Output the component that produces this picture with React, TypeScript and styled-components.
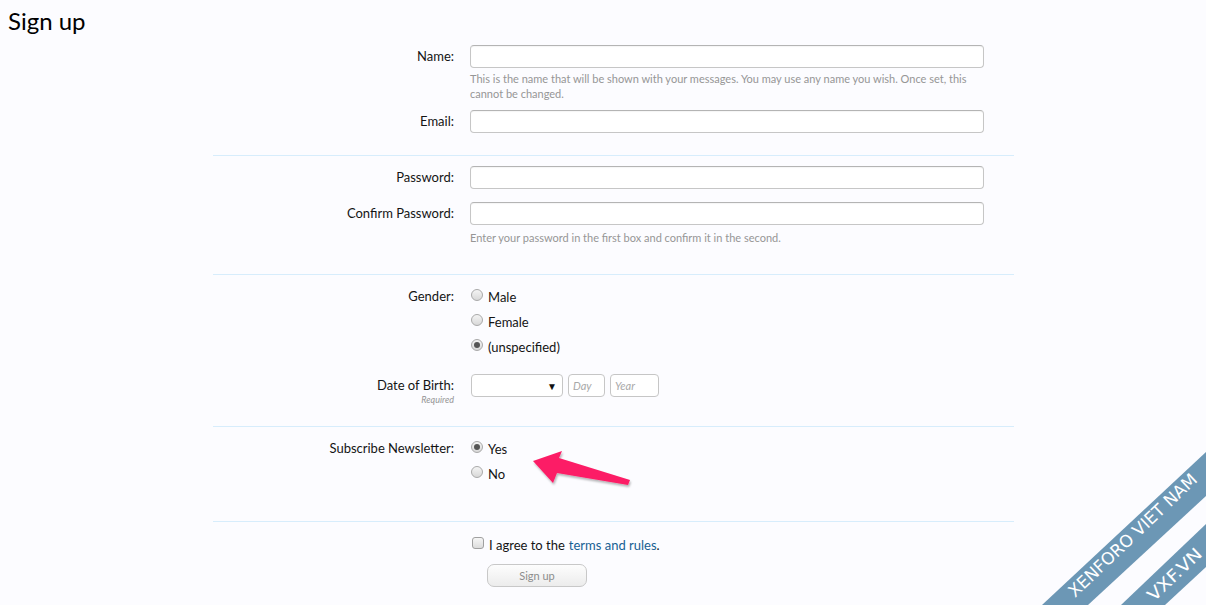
import styled, { createGlobalStyle } from "styled-components";

const GlobalStyle = createGlobalStyle`
  html, body {
    margin: 0;
    padding: 0;
    background: #fcfcff;
  }
  body {
    font-family: Lato, "Liberation Sans", sans-serif;
    color: #141414;
  }
`;

const Page = styled.div`
  position: relative;
  width: 1206px;
  height: 605px;
  overflow: hidden;
  background: #fcfcff;
`;

const Title = styled.h1`
  margin: 0;
  height: 45px;
  padding-left: 8px;
  font-size: 24px;
  font-weight: normal;
  line-height: 42px;
  color: #000;
`;

const Form = styled.form`
  margin-left: 213px;
  width: 801px;
`;

const Section = styled.div<{ $top: number; $bottom: number; $last?: boolean }>`
  padding-top: ${(p) => p.$top}px;
  padding-bottom: ${(p) => p.$bottom}px;
  border-bottom: ${(p) => (p.$last ? "none" : "1px solid #d7edfc")};
  display: flex;
  flex-direction: column;
`;

const Row = styled.div<{ $gap?: number }>`
  display: grid;
  grid-template-columns: 241px 514px;
  column-gap: 16px;
  margin-top: ${(p) => p.$gap ?? 0}px;
`;

const Label = styled.div<{ $lh?: number }>`
  text-align: right;
  font-size: 13px;
  line-height: ${(p) => p.$lh ?? 23}px;
  color: #141414;
`;

const Required = styled.div`
  font-size: 9px;
  font-style: italic;
  color: #969696;
  line-height: 11px;
  margin-top: -3px;
`;

const Field = styled.div`
  display: flex;
  flex-direction: column;
`;

const TextInput = styled.input`
  box-sizing: border-box;
  width: 514px;
  height: 23px;
  border: 1px solid #c6c6c6;
  border-top-color: #b4b4b4;
  border-radius: 4px;
  background: #fff;
  box-shadow: inset 0 1px 1px rgba(0, 0, 0, 0.04);
  padding: 0 4px;
  font-family: inherit;
  font-size: 13px;
  outline: none;
`;

const Hint = styled.p<{ $top: number }>`
  margin: ${(p) => p.$top}px 0 0;
  width: 506px;
  font-size: 11px;
  line-height: 15px;
  color: #969696;
`;

const Choice = styled.label`
  display: flex;
  align-items: center;
  height: 25px;
  font-size: 13px;
  color: #141414;
  padding-left: 1px;
`;

const Radio = styled.span<{ $checked?: boolean }>`
  position: relative;
  box-sizing: border-box;
  width: 12px;
  height: 12px;
  border-radius: 50%;
  border: 1px solid #a9a9a9;
  background: linear-gradient(#f4f4f4, #d8d8d8);
  margin-right: 5px;
  margin-top: -3px;
  &::after {
    content: "";
    display: ${(p) => (p.$checked ? "block" : "none")};
    position: absolute;
    left: 2px;
    top: 2px;
    width: 6px;
    height: 6px;
    border-radius: 50%;
    background: #555;
  }
`;

const Checkbox = styled.span`
  box-sizing: border-box;
  width: 12px;
  height: 12px;
  border-radius: 3px;
  border: 1px solid #a0a0a0;
  background: linear-gradient(#f6f6f6, #dcdcdc);
  margin-left: 1px;
  margin-right: 5px;
  margin-top: -3px;
`;

const Link = styled.a`
  color: #176093;
  text-decoration: none;
  margin-left: 4px;
`;

const DateRow = styled.div`
  display: flex;
  gap: 5px;
  padding-left: 1px;
`;

const Select = styled.div`
  box-sizing: border-box;
  width: 92px;
  height: 23px;
  border: 1px solid #c6c6c6;
  border-radius: 4px;
  background: #fff;
  display: flex;
  align-items: center;
  justify-content: flex-end;
  padding-right: 5px;
  font-size: 10px;
  color: #111;
`;

const SmallInput = styled.input<{ $w: number }>`
  box-sizing: border-box;
  width: ${(p) => p.$w}px;
  height: 23px;
  border: 1px solid #c6c6c6;
  border-radius: 4px;
  background: #fff;
  padding: 0 4px;
  font-family: inherit;
  font-size: 11px;
  outline: none;
  &::placeholder {
    color: #a8a8a8;
    font-style: italic;
  }
`;

const Button = styled.button`
  box-sizing: border-box;
  width: 100px;
  height: 23px;
  margin: 7px 0 0 17px;
  border: 1px solid #c8c8c8;
  border-radius: 7px;
  background: linear-gradient(#fdfdfd, #ececec);
  font-family: inherit;
  font-size: 11px;
  color: #8c8c8c;
`;

const Overlay = styled.svg`
  position: absolute;
  pointer-events: none;
`;

function Arrow() {
  return (
    <Overlay
      width="110"
      height="50"
      viewBox="525 445 110 50"
      style={{ left: 525, top: 445 }}
    >
      <defs>
        <filter id="sh" x="-20%" y="-30%" width="140%" height="160%">
          <feDropShadow dx="1" dy="2" stdDeviation="1.2" floodColor="#000" floodOpacity="0.3" />
        </filter>
      </defs>
      <polygon
        points="533,461 562,451 559,458 630,480 628,485 557,473 553,483"
        fill="#fc1d66"
        filter="url(#sh)"
      />
    </Overlay>
  );
}

const ribbonFont = "'DejaVu Sans Condensed', 'Liberation Sans', sans-serif";

function Ribbon() {
  return (
    <Overlay
      width="176"
      height="165"
      viewBox="1030 440 176 165"
      style={{ right: 0, bottom: 0 }}
    >
      <polygon points="1206,452 1206,496 1088,605 1042,605" fill="#6c97b5" />
      <polygon points="1206,524 1206,567 1165,605 1121,605" fill="#6c97b5" />
      <text
        x="1075"
        y="598"
        transform="rotate(-43.5 1075 598)"
        fill="#fff"
        fontFamily={ribbonFont}
        fontSize="17"
        textLength="170"
        lengthAdjust="spacingAndGlyphs"
      >
        XENFORO VIET NAM
      </text>
      <text
        x="1154"
        y="602"
        transform="rotate(-43.5 1154 602)"
        fill="#fff"
        fontFamily={ribbonFont}
        fontSize="17"
        textLength="68"
        lengthAdjust="spacingAndGlyphs"
      >
        VXF.VN
      </text>
    </Overlay>
  );
}

export default function App() {
  return (
    <Page>
      <GlobalStyle />
      <Title>Sign up</Title>
      <Form>
        <Section $top={0} $bottom={22}>
          <Row>
            <Label>Name:</Label>
            <Field>
              <TextInput type="text" />
              <Hint $top={3}>
                This is the name that will be shown with your messages. You may use any name you
                wish. Once set, this cannot be changed.
              </Hint>
            </Field>
          </Row>
          <Row $gap={9}>
            <Label>Email:</Label>
            <TextInput type="email" />
          </Row>
        </Section>

        <Section $top={10} $bottom={29}>
          <Row>
            <Label>Password:</Label>
            <TextInput type="password" />
          </Row>
          <Row $gap={13}>
            <Label>Confirm Password:</Label>
            <Field>
              <TextInput type="password" />
              <Hint $top={5}>
                Enter your password in the first box and confirm it in the second.
              </Hint>
            </Field>
          </Row>
        </Section>

        <Section $top={9} $bottom={21}>
          <Row>
            <Label $lh={25}>Gender:</Label>
            <Field>
              <Choice>
                <Radio />
                Male
              </Choice>
              <Choice>
                <Radio />
                Female
              </Choice>
              <Choice>
                <Radio $checked />
                (unspecified)
              </Choice>
            </Field>
          </Row>
          <Row $gap={15}>
            <Label>
              Date of Birth:
              <Required>Required</Required>
            </Label>
            <DateRow>
              <Select>▼</Select>
              <SmallInput $w={37} placeholder="Day" />
              <SmallInput $w={49} placeholder="Year" />
            </DateRow>
          </Row>
        </Section>

        <Section $top={9} $bottom={35}>
          <Row>
            <Label $lh={25}>Subscribe Newsletter:</Label>
            <Field>
              <Choice>
                <Radio $checked />
                Yes
              </Choice>
              <Choice>
                <Radio />
                No
              </Choice>
            </Field>
          </Row>
        </Section>

        <Section $top={10} $bottom={0} $last>
          <Row>
            <div />
            <Field>
              <Choice>
                <Checkbox />
                I agree to the
                <Link href="#">terms and rules</Link>.
              </Choice>
              <Button type="button">Sign up</Button>
            </Field>
          </Row>
        </Section>
      </Form>
      <Arrow />
      <Ribbon />
    </Page>
  );
}
